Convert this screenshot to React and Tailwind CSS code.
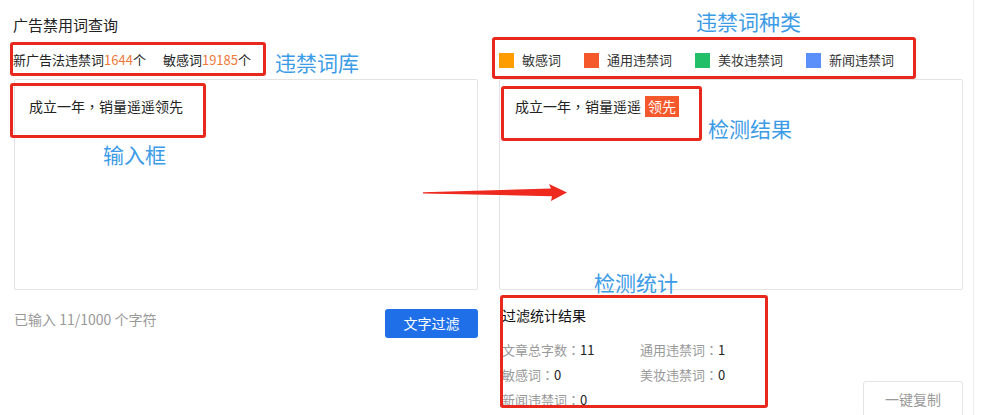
import React from "react";

const font = { fontFamily: '"Noto Sans CJK SC", "Noto Sans", sans-serif' };
const tc = "[font-family:'Noto_Sans_CJK_TC',sans-serif]";

function RedBox({ className }) {
  return <div className={"absolute border-[3px] border-[#e8271d] rounded-[3px] " + className} />;
}

function Note({ className, children }) {
  return (
    <div className={"absolute text-[21px] leading-[21px] text-[#3b9be6] whitespace-nowrap " + className}>
      {children}
    </div>
  );
}

function Legend({ color, label }) {
  return (
    <div className="flex items-center mr-[23px]">
      <span className={"w-[15px] h-[15px] " + color} />
      <span className="ml-[8px] text-[13px] leading-[20px] text-[#333]">{label}</span>
    </div>
  );
}

function Stat({ label, value }) {
  return (
    <div className="text-[13px] leading-[25px] whitespace-nowrap">
      <span className="text-[#999]">
        {label}
        <span className={tc}>：</span>
      </span>
      <span className="text-[#222]">{value}</span>
    </div>
  );
}

export default function App() {
  return (
    <div className="relative w-[981px] h-[415px] overflow-hidden bg-white" style={font}>
      <div className="flex pl-[14px]">
        {/* Left column */}
        <div className="w-[464px] flex flex-col">
          <div className="pt-[15px] text-[15px] leading-[20px] text-[#222] -ml-[1px]">广告禁用词查询</div>
          <div className="mt-[15px] text-[13px] leading-[20px] text-[#222] -ml-[1px] whitespace-nowrap">
            新广告法违禁词<span className="text-[#ee7a3a]">1644</span>个
            <span className="ml-[17px]">敏感词</span>
            <span className="text-[#ee7a3a]">19185</span>个
          </div>
          <div className="mt-[9px] h-[211px] border border-[#e3e3e3] rounded-[2px] pl-[14px] pt-[16px] text-[14px] leading-[20px] text-[#222]">
            成立一年<span className={tc}>，</span>销量遥遥领先
          </div>
          <div className="mt-[19px] flex justify-between items-start">
            <div className="text-[14px] leading-[20px] text-[#999]">已输入 11/1000 个字符</div>
            <button className="w-[93px] h-[29px] rounded-[3px] bg-[#1e6fe8] text-white text-[14px] leading-[29px]">
              文字过滤
            </button>
          </div>
        </div>

        {/* Right column */}
        <div className="ml-[21px] w-[464px] flex flex-col">
          <div className="h-[79px] pt-[50px]">
            <div className="flex items-center h-[20px]">
              <Legend color="bg-[#ff9c00]" label="敏感词" />
              <Legend color="bg-[#f4582b]" label="通用违禁词" />
              <Legend color="bg-[#20bf68]" label="美妆违禁词" />
              <Legend color="bg-[#5b8ff9]" label="新闻违禁词" />
            </div>
          </div>
          <div className="h-[211px] border border-[#e3e3e3] rounded-[2px] pl-[15px] pt-[15px] text-[14px] leading-[22px] text-[#222]">
            成立一年<span className={tc}>，</span>销量遥遥
            <span className="ml-[4px] px-[3px] inline-block leading-[21px] bg-[#f4582b] text-white">领先</span>
          </div>
          <div className="flex justify-between">
            <div className="pl-[3px]">
              <div className="mt-[15px] text-[14px] leading-[20px] text-[#111]">过滤统计结果</div>
              <div className="mt-[12px] grid grid-cols-[138px_auto]">
                <Stat label="文章总字数" value="11" />
                <Stat label="通用违禁词" value="1" />
                <Stat label="敏感词" value="0" />
                <Stat label="美妆违禁词" value="0" />
                <Stat label="新闻违禁词" value="0" />
              </div>
            </div>
            <button className="mt-[91px] w-[100px] h-[36px] border border-[#e3e3e3] rounded-[3px] bg-white text-[14px] text-[#999]">
              一键复制
            </button>
          </div>
        </div>
      </div>

      {/* right faint edge */}
      <div className="absolute left-[973px] top-0 h-full w-px bg-[#ececec]" />

      {/* Annotation overlays */}
      <RedBox className="left-[10px] top-[42px] w-[256px] h-[34px]" />
      <RedBox className="left-[10px] top-[83px] w-[196px] h-[55px]" />
      <RedBox className="left-[492px] top-[37px] w-[424px] h-[42px]" />
      <RedBox className="left-[501px] top-[86px] w-[201px] h-[55px]" />
      <RedBox className="left-[500px] top-[295px] w-[268px] h-[113px]" />

      <Note className="left-[275px] top-[52px]">违禁词库</Note>
      <Note className="left-[103px] top-[144px]">输入框</Note>
      <Note className="left-[696px] top-[11px]">违禁词种类</Note>
      <Note className="left-[708px] top-[118px]">检测结果</Note>
      <Note className="left-[594px] top-[272px]">检测统计</Note>

      <svg className="absolute left-0 top-0" width="981" height="415" viewBox="0 0 981 415">
        <polygon
          points="423,192.3 551,188.6 549,184 567,192.5 551,201 552,196.2 423,193.6"
          fill="#ee2a1f"
        />
      </svg>
    </div>
  );
}
